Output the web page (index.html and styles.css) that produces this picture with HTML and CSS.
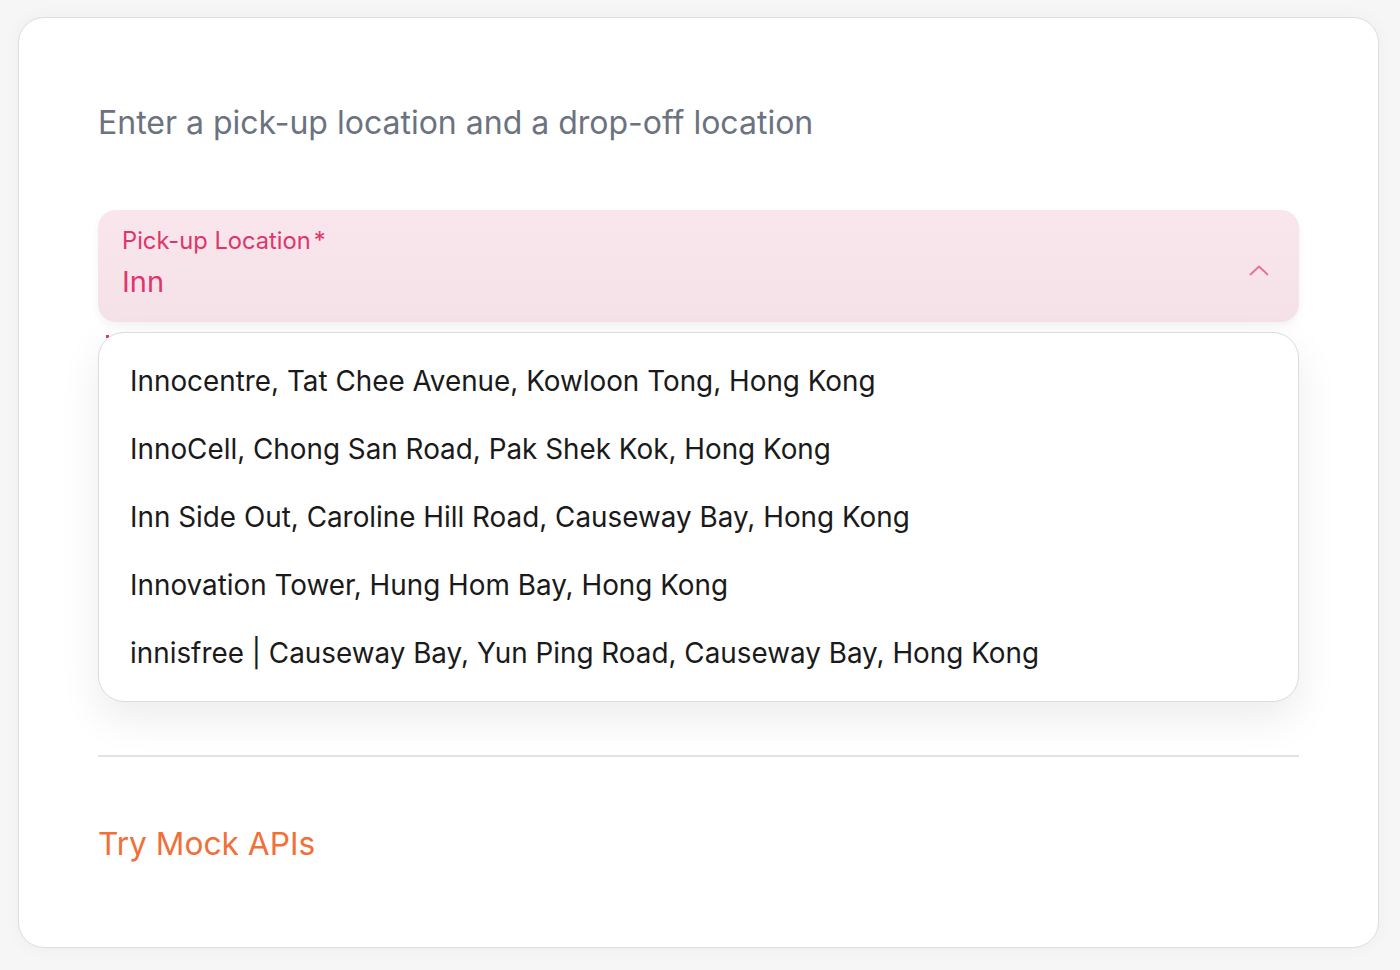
FILE: index.html
```html
<!DOCTYPE html>
<html lang="en">
<head>
<meta charset="utf-8">
<title>Pick-up location</title>
<link rel="stylesheet" href="styles.css">
</head>
<body>
<main class="card">
  <p class="intro">Enter a pick-up location and a drop-off location</p>
  <div class="field">
    <div class="input">
      <div class="input-text">
        <label class="label">Pick-up Location<span class="req">*</span></label>
        <div class="value">Inn</div>
      </div>
      <svg class="chevron" width="20" height="12" viewBox="0 0 20 12" fill="none"><path d="M1.5 10.5 L10 2.5 L18.5 10.5" stroke="#ec6f92" stroke-width="1.8" stroke-linecap="round" stroke-linejoin="round"/></svg>
    </div>
    <span class="tick"></span>
    <ul class="menu">
      <li>Innocentre, Tat Chee Avenue, Kowloon Tong, Hong Kong</li>
      <li>InnoCell, Chong San Road, Pak Shek Kok, Hong Kong</li>
      <li>Inn Side Out, Caroline Hill Road, Causeway Bay, Hong Kong</li>
      <li>Innovation Tower, Hung Hom Bay, Hong Kong</li>
      <li>innisfree | Causeway Bay, Yun Ping Road, Causeway Bay, Hong Kong</li>
    </ul>
  </div>
  <hr class="divider">
  <a class="mock" href="#">Try Mock APIs</a>
</main>
</body>
</html>
```
FILE: styles.css
```css
* { box-sizing: border-box; }
html, body { margin: 0; padding: 0; }
body {
  background: #f6f6f6;
  font-family: Inter, "Noto Sans", sans-serif;
  padding: 17px 21px 22px 18px;
  height: 970px;
}
.card {
  background: #fff;
  border: 1px solid #dedede;
  border-radius: 26px;
  box-shadow: 0 0 18px rgba(0,0,0,0.04);
  height: 931px;
  padding: 0 79px;
  display: flex;
  flex-direction: column;
}
.intro {
  margin: 85px 0 0;
  font-size: 32px;
  line-height: 40px;
  color: #6b7280;
}
.field {
  margin-top: 67px;
  position: relative;
}
.input {
  height: 112px;
  border-radius: 18px;
  background: linear-gradient(#f9e6ed, #f5e1e8);
  box-shadow: 0 4px 10px rgba(0,0,0,0.05);
  display: flex;
  align-items: flex-start;
  padding: 17px 30px 0 24px;
}
.input-text { flex: 1; display: flex; flex-direction: column; }
.label {
  font-size: 23.7px;
  line-height: 28px;
  color: #e0356a;
}
.req { margin-left: 3px; }
.value {
  font-size: 29px;
  line-height: 38px;
  color: #e0356a;
  margin-top: 8px;
}
.chevron { margin-top: 37px; }
.tick {
  position: absolute;
  left: 8px;
  top: 125px;
  width: 3px;
  height: 3px;
  background: #e0356a;
}
.menu {
  list-style: none;
  margin: 10px 0 0;
  padding: 14px 0;
  background: #fff;
  border: 1px solid #dcdcdc;
  border-radius: 26px;
  box-shadow: 0 16px 40px rgba(0,0,0,0.08);
  position: relative;
}
.menu li {
  height: 68px;
  display: flex;
  align-items: center;
  padding-left: 31px;
  font-size: 27.85px;
  color: #1a1a1a;
}
.divider {
  border: 0;
  border-top: 2px solid #e2e2e2;
  margin: 53px 0 0;
}
.mock {
  margin-top: 67px;
  font-size: 31.7px;
  line-height: 40px;
  color: #f07038;
  text-decoration: none;
  align-self: flex-start;
}
```
